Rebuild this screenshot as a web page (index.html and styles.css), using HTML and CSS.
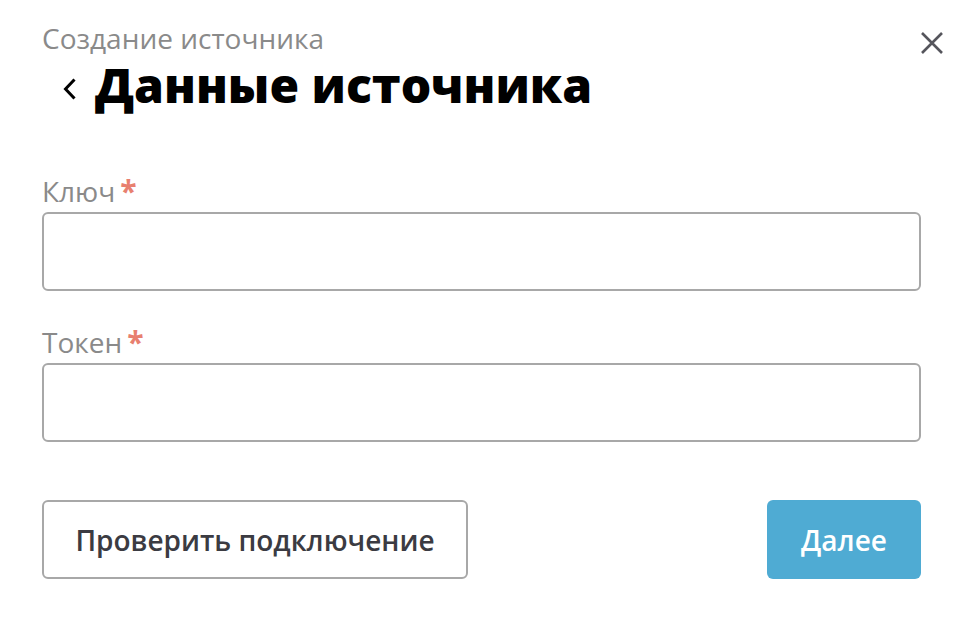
FILE: index.html
```html
<!DOCTYPE html>
<html lang="ru">
<head>
    <meta charset="UTF-8">
    <meta name="viewport" content="width=device-width, initial-scale=1.0">
    <title>Данные источника</title>
    <link rel="stylesheet" href="styles.css">
</head>
<body>
<div class="dialog">
    <div class="head">
        <div class="head-text">
            <div class="step">Создание источника</div>
            <h1 class="title">
                <a href="#" class="back">
                    <svg width="14" height="22" viewBox="0 0 14 22"><path d="M11.5 1.5 L2.5 11 L11.5 20.5" fill="none" stroke="#000" stroke-width="3"/></svg>
                </a>
                Данные источника
            </h1>
        </div>
        <a href="#" class="close">
            <svg width="22" height="22" viewBox="0 0 22 22"><path d="M1 1 L21 21 M21 1 L1 21" stroke="#55555c" stroke-width="2.6"/></svg>
        </a>
    </div>

    <form class="form">
        <label class="field">
            <span class="label">Ключ<span class="req">*</span></span>
            <input type="text" class="input">
        </label>
        <label class="field">
            <span class="label">Токен<span class="req">*</span></span>
            <input type="text" class="input">
        </label>
        <div class="actions">
            <button type="button" class="btn btn-outline">Проверить подключение</button>
            <button type="button" class="btn btn-primary">Далее</button>
        </div>
    </form>
</div>
</body>
</html>
```

FILE: styles.css
```css
body {
  margin: 0;
  font-family: "Open Sans", "Liberation Sans", sans-serif;
  background: #fff;
}

.dialog {
  padding: 20px 41px 0 42px;
}

.head {
  display: flex;
  justify-content: space-between;
  align-items: flex-start;
}

.step {
  font-size: 28px;
  line-height: 36px;
  color: #8a8a8a;
}

.title {
  display: flex;
  align-items: center;
  margin: 0;
  padding-left: 21px;
  font-size: 48px;
  line-height: 58px;
  font-weight: 800;
  color: #000;
}

.back {
  display: flex;
  margin-right: 18px;
  margin-top: 7px;
}

.close {
  display: flex;
  margin-top: 12px;
  margin-right: -22px;
}

.form {
  margin-top: 59px;
}

.field {
  display: block;
  margin-bottom: 33px;
}

.label {
  display: block;
  font-size: 28px;
  line-height: 36px;
  color: #8a8a8a;
  margin-bottom: 3px;
}

.req {
  margin-left: 5px;
  font-size: 30px;
  color: #e8806f;
  font-weight: 700;
}

.input {
  display: block;
  box-sizing: border-box;
  width: 100%;
  height: 79px;
  border: 2px solid #a8a8a8;
  border-radius: 6px;
  font: inherit;
  padding: 0 16px;
}

.actions {
  display: flex;
  justify-content: space-between;
  margin-top: 58px;
}

.btn {
  box-sizing: border-box;
  height: 79px;
  border-radius: 6px;
  font-family: inherit;
  font-size: 28px;
  font-weight: 600;
  cursor: pointer;
}

.btn-outline {
  width: 426px;
  background: #fff;
  border: 2px solid #a8a8a8;
  color: #3b3b42;
}

.btn-primary {
  width: 154px;
  background: #4fabd3;
  border: none;
  color: #fff;
}
```
